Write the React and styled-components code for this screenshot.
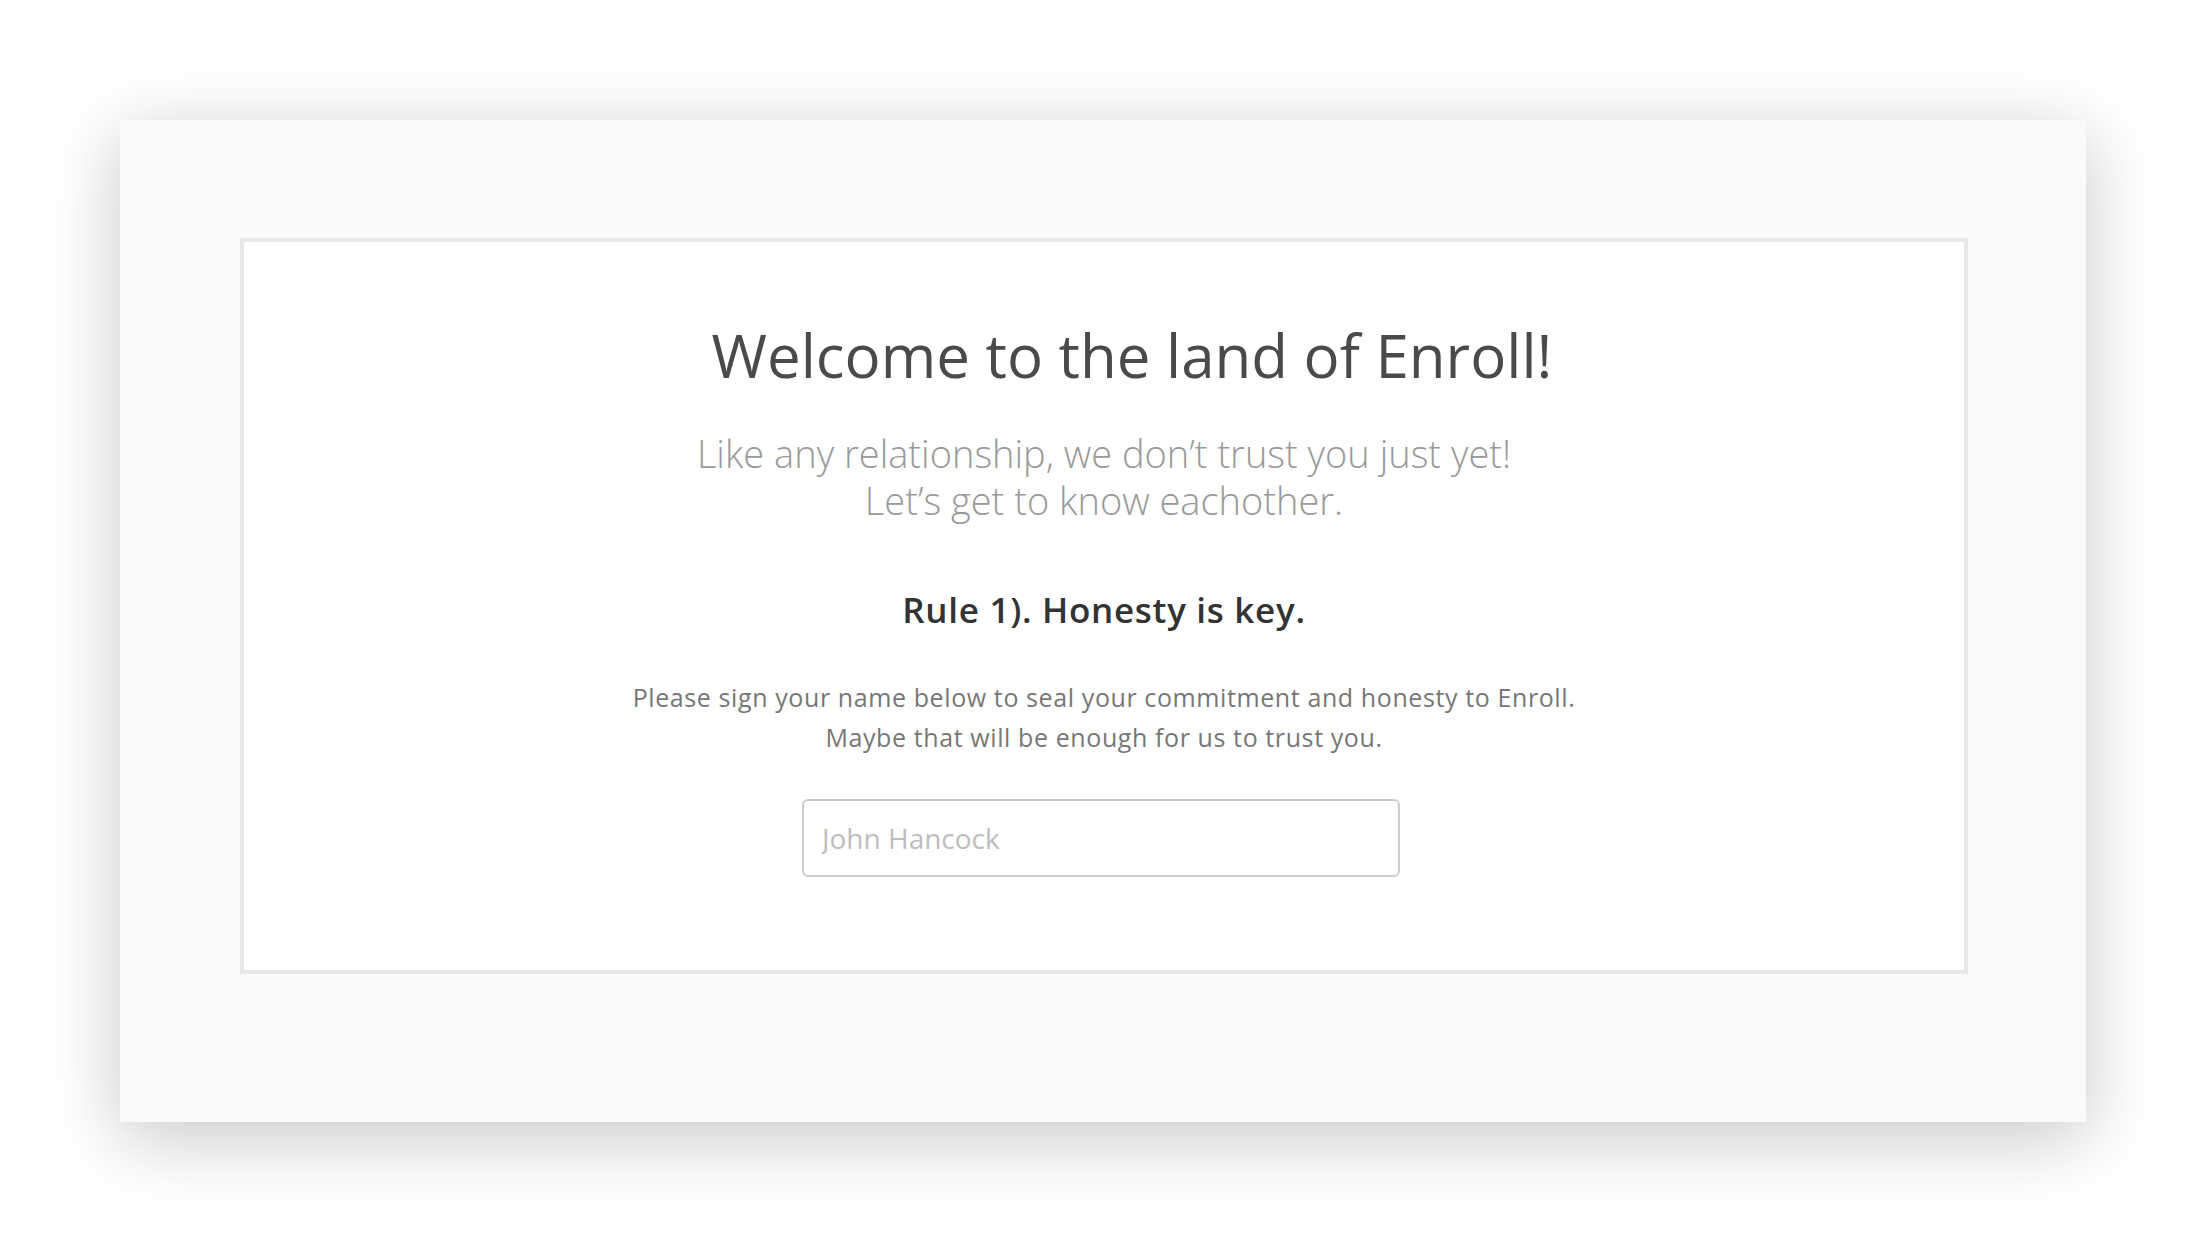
import React from "react";
import styled, { createGlobalStyle } from "styled-components";

const Global = createGlobalStyle`
  html, body { margin: 0; padding: 0; background: #ffffff; }
  body { font-family: "Open Sans", "Lato", sans-serif; -webkit-font-smoothing: antialiased; }
  * { box-sizing: border-box; }
`;

const Page = styled.div`
  padding: 120px 120px 120px 120px;
`;

const Panel = styled.section`
  background: #fafafa;
  box-shadow: 0 16px 70px rgba(0, 0, 0, 0.22);
  padding: 118px 118px 148px 120px;
`;

const Card = styled.div`
  background: #ffffff;
  border: 4px solid #e8e8e8;
  height: 736px;
  padding-top: 77px;
  display: flex;
  flex-direction: column;
  align-items: center;
  text-align: center;
`;

const Title = styled.h1`
  margin: 0;
  font-family: "Open Sans", sans-serif;
  font-weight: 400;
  font-size: 60px;
  line-height: 72px;
  color: #4a4a4a;
  padding-left: 56px;
`;

const Subtitle = styled.p`
  margin: 39px 0 0;
  font-family: "Open Sans", sans-serif;
  font-weight: 300;
  font-size: 38px;
  line-height: 47px;
  color: #9a9a9a;
`;

const Rule = styled.h2`
  margin: 64px 0 0;
  font-family: "Open Sans", sans-serif;
  font-weight: 600;
  font-size: 35px;
  line-height: 44px;
  letter-spacing: 0.7px;
  color: #333333;
`;

const Body = styled.p`
  margin: 45px 0 0;
  font-family: "Open Sans", sans-serif;
  font-weight: 400;
  font-size: 25px;
  line-height: 40px;
  letter-spacing: 0.6px;
  color: #777777;
`;

const NameInput = styled.input`
  margin-top: 42px;
  margin-right: 6px;
  width: 598px;
  height: 78px;
  border: 2px solid #cccccc;
  border-radius: 6px;
  background: #ffffff;
  padding: 0 18px;
  font-family: "Open Sans", sans-serif;
  font-size: 28px;
  color: #555;
  outline: none;
  &::placeholder { color: #bdbdbd; }
`;

export default function App() {
  return (
    <>
      <Global />
      <Page>
        <Panel>
          <Card>
            <Title>Welcome to the land of Enroll!</Title>
            <Subtitle>
              Like any relationship, we don’t trust you just yet!
              <br />
              Let’s get to know eachother.
            </Subtitle>
            <Rule>Rule 1). Honesty is key.</Rule>
            <Body>
              Please sign your name below to seal your commitment and honesty to Enroll.
              <br />
              Maybe that will be enough for us to trust you.
            </Body>
            <NameInput placeholder="John Hancock" />
          </Card>
        </Panel>
      </Page>
    </>
  );
}
